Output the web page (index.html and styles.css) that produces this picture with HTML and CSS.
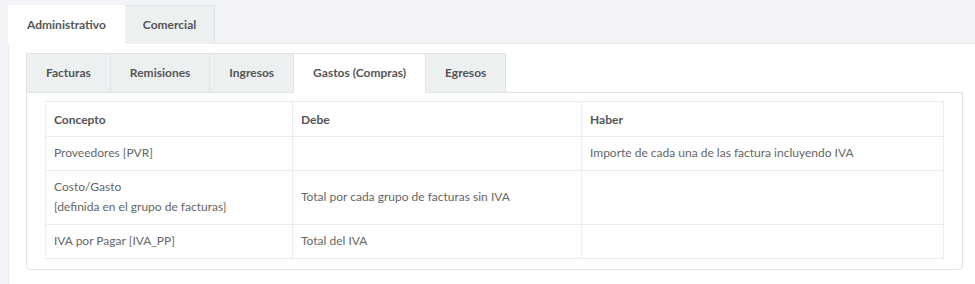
FILE: index.html
```html
<!DOCTYPE html>
<html lang="es">
<head>
    <meta charset="UTF-8">
    <meta name="viewport" content="width=device-width, initial-scale=1.0">
    <title>Asientos contables</title>
    <link rel="stylesheet" href="styles.css">
</head>
<body>
    <div class="page">
        <ul class="tabs tabs-main">
            <li class="tab active">Administrativo</li>
            <li class="tab">Comercial</li>
        </ul>
        <div class="main-panel">
            <ul class="tabs tabs-sub">
                <li class="tab">Facturas</li>
                <li class="tab">Remisiones</li>
                <li class="tab">Ingresos</li>
                <li class="tab active">Gastos (Compras)</li>
                <li class="tab">Egresos</li>
            </ul>
            <div class="sub-panel">
                <table class="asientos">
                    <thead>
                        <tr>
                            <th class="col-concepto">Concepto</th>
                            <th class="col-debe">Debe</th>
                            <th>Haber</th>
                        </tr>
                    </thead>
                    <tbody>
                        <tr>
                            <td>Proveedores [PVR]</td>
                            <td></td>
                            <td>Importe de cada una de las factura incluyendo IVA</td>
                        </tr>
                        <tr>
                            <td>Costo/Gasto<br>[definida en el grupo de facturas]</td>
                            <td>Total por cada grupo de facturas sin IVA</td>
                            <td></td>
                        </tr>
                        <tr>
                            <td>IVA por Pagar [IVA_PP]</td>
                            <td>Total del IVA</td>
                            <td></td>
                        </tr>
                    </tbody>
                </table>
            </div>
        </div>
    </div>
</body>
</html>
```

FILE: styles.css
```css
body {
    font-family: Lato, "Open Sans", sans-serif;
    font-size: 12px;
    color: #666;
    background-color: #f3f4f7;
    margin: 0;
    padding: 0;
}

.page {
    padding: 5px 0 0 8px;
}

.tabs {
    display: flex;
    list-style: none;
    margin: 0;
    padding: 0;
}

.tab {
    background-color: #ecf0f1;
    border: 1px solid #dfe4e7;
    border-bottom: none;
    margin-right: -1px;
    color: #555;
    font-weight: bold;
}

.tab.active {
    background-color: #fff;
    position: relative;
    z-index: 1;
}

.tabs-main {
    border-bottom: 1px solid #e2e5e8;
}

.tabs-main .tab {
    padding: 11px 18px 10px 18px;
    line-height: 16px;
    margin-bottom: -1px;
}

.tabs-main .tab.active {
    border-color: #fff;
    padding-bottom: 11px;
}

.main-panel {
    background-color: #fff;
    border-left: 1px solid #e6e9ec;
    padding: 9px 12px 15px 17px;
}

.tabs-sub .tab {
    padding: 11px 19px 11px 19px;
    line-height: 16px;
}

.tabs-sub .tab.active {
    margin-bottom: -1px;
    padding-bottom: 12px;
}

.sub-panel {
    border: 1px solid #e0e4e7;
    border-radius: 0 0 4px 4px;
    padding: 8px 18px 10px 18px;
}

.asientos {
    width: 100%;
    border-collapse: collapse;
}

.asientos th,
.asientos td {
    border: 1px solid #eaeced;
    padding: 6px 8px 7px 8px;
    line-height: 20px;
    text-align: left;
    vertical-align: middle;
}

.asientos th {
    color: #555;
    font-weight: bold;
    padding: 8px 8px 6px 8px;
}

.col-concepto {
    width: 230px;
}

.col-debe {
    width: 272px;
}
```
